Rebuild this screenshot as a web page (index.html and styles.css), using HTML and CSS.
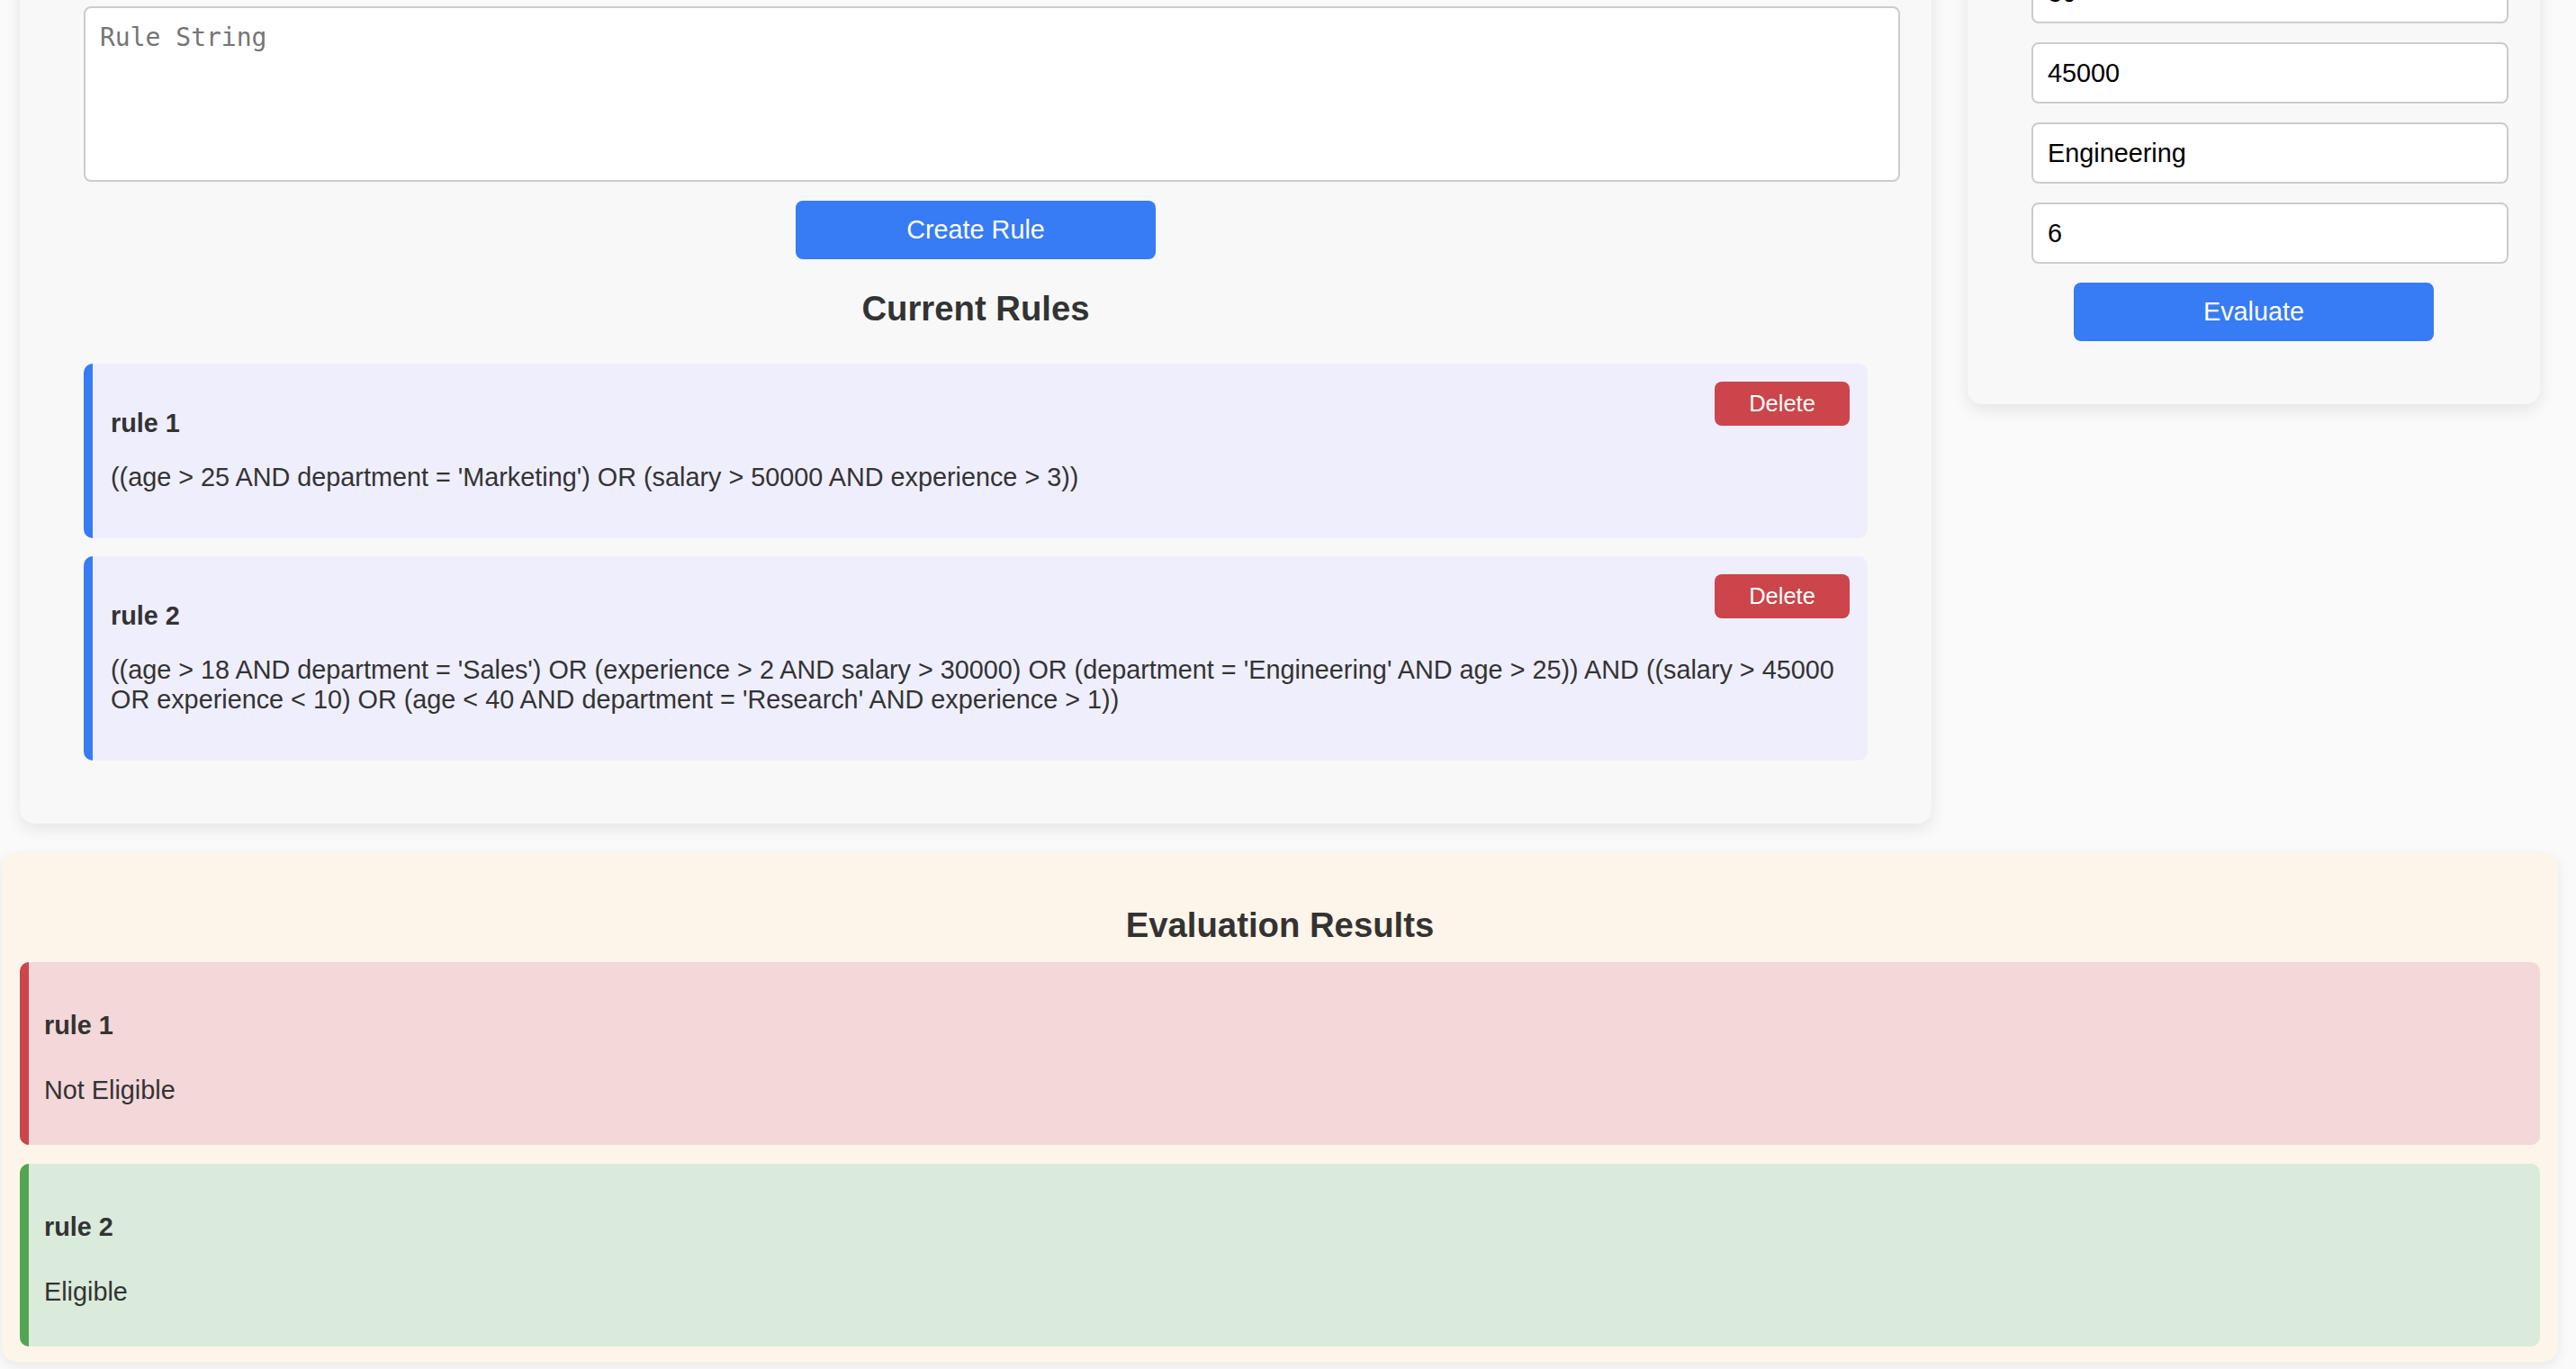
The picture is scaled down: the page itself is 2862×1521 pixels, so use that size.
FILE: index.html
```html
<!DOCTYPE html>
<html lang="en">
<head>
<meta charset="utf-8">
<title>Rule Engine</title>
<link rel="stylesheet" href="styles.css">
</head>
<body>
<div class="page">
  <div class="top-row">
    <section class="card card-rules">
      <textarea class="rule-input" placeholder="Rule String"></textarea>
      <button class="btn btn-primary">Create Rule</button>
      <h3 class="section-title">Current Rules</h3>
      <div class="rule-list">
        <div class="rule-item">
          <button class="btn-delete">Delete</button>
          <h4 class="rule-name">rule 1</h4>
          <p class="rule-text">((age &gt; 25 AND department = 'Marketing') OR (salary &gt; 50000 AND experience &gt; 3))</p>
        </div>
        <div class="rule-item">
          <button class="btn-delete">Delete</button>
          <h4 class="rule-name">rule 2</h4>
          <p class="rule-text">((age &gt; 18 AND department = 'Sales') OR (experience &gt; 2 AND salary &gt; 30000) OR (department = 'Engineering' AND age &gt; 25)) AND ((salary &gt; 45000 OR experience &lt; 10) OR (age &lt; 40 AND department = 'Research' AND experience &gt; 1))</p>
        </div>
      </div>
    </section>
    <section class="card card-eval">
      <input class="field" type="text" value="30">
      <input class="field" type="text" value="45000">
      <input class="field" type="text" value="Engineering">
      <input class="field" type="text" value="6">
      <button class="btn btn-primary">Evaluate</button>
    </section>
  </div>
  <section class="results">
    <h3 class="section-title results-title">Evaluation Results</h3>
    <div class="result-item result-fail">
      <h4 class="rule-name">rule 1</h4>
      <p class="result-text">Not Eligible</p>
    </div>
    <div class="result-item result-pass">
      <h4 class="rule-name">rule 2</h4>
      <p class="result-text">Eligible</p>
    </div>
  </section>
</div>
</body>
</html>
```

FILE: styles.css
```css
html, body {
  margin: 0;
  padding: 0;
}

body {
  background: #fafafa;
  color: #333;
  font-family: "Liberation Sans", Arial, Helvetica, sans-serif;
  font-size: 28.8px;
  overflow: hidden;
}

.page {
  padding: 0 20px 8px 2px;
}

.top-row {
  display: grid;
  grid-template-columns: 1fr 636px;
  column-gap: 40px;
  align-items: start;
  padding: 0 20px;
  margin-top: -100px;
}

.card {
  background: #f8f8f8;
  border-radius: 16px;
  box-shadow: 0 6px 18px rgba(0, 0, 0, 0.09);
  padding: 70px 71px;
}

.card-rules {
  padding-top: 107.3px;
}

.card-eval {
  padding-top: 58px;
}

.rule-input {
  display: block;
  box-sizing: content-box;
  width: 100%;
  height: 159px;
  margin: 0 0 20.7px 0;
  padding: 16px;
  border: 2px solid #ccc;
  border-radius: 8px;
  background: #fff;
  font-family: "DejaVu Sans Mono", "Liberation Mono", monospace;
  font-size: 28px;
  line-height: 33px;
  color: #333;
  resize: none;
}

.rule-input::placeholder {
  color: #757575;
}

.btn {
  display: block;
  margin: 0 auto;
  border: 0;
  cursor: pointer;
  font-family: "Liberation Sans", Arial, Helvetica, sans-serif;
}

.btn-primary {
  width: 400px;
  height: 65px;
  background: #377bf5;
  color: #fff;
  border-radius: 8px;
  font-size: 28.8px;
  padding: 0;
}

.section-title {
  font-size: 38.3px;
  line-height: 43px;
  font-weight: bold;
  text-align: center;
  margin: 33px 0 40.5px;
  color: #333;
}

.rule-list {
  display: flex;
  flex-direction: column;
  gap: 20px;
}

.rule-item {
  background: #efeefd;
  border-left: 10px solid #377bf5;
  border-radius: 10px;
  padding: 20px;
}

.btn-delete {
  float: right;
  width: 150px;
  height: 49px;
  padding: 0;
  border: 0;
  border-radius: 8px;
  background: #cc454b;
  color: #fff;
  font-family: "Liberation Sans", Arial, Helvetica, sans-serif;
  font-size: 25.5px;
  cursor: pointer;
}

.rule-name {
  font-size: 28.8px;
  line-height: 32px;
  font-weight: bold;
  margin: 30px 0 28px;
  color: #333;
}

.rule-text {
  margin: 0 0 31px;
  line-height: 33px;
  color: #333;
}

.field {
  display: block;
  box-sizing: content-box;
  width: 100%;
  height: 32px;
  margin: 0 0 21px 0;
  padding: 16px;
  border: 2px solid #ccc;
  border-radius: 8px;
  background: #fff;
  font-family: "Liberation Sans", Arial, Helvetica, sans-serif;
  font-size: 28.8px;
  line-height: 32px;
  color: #000;
}

.field:last-of-type {
  margin-bottom: 20.7px;
}

.results {
  margin-top: 33px;
  background: #fdf5e9;
  border-radius: 16px;
  box-shadow: 0 4px 14px rgba(0, 0, 0, 0.08);
  padding: 20px 20px 17px;
}

.results-title {
  margin: 37.5px 0 20.5px;
}

.result-item {
  border-left: 10px solid;
  border-radius: 10px;
  padding: 17px;
}

.result-item + .result-item {
  margin-top: 21px;
}

.result-item .rule-name {
  margin: 37px 0 40px;
}

.result-text {
  margin: 0 0 28px;
  line-height: 32px;
  color: #333;
}

.result-fail {
  background: #f3d7d9;
  border-left-color: #cc454b;
}

.result-pass {
  background: #daebdb;
  border-left-color: #52a552;
}
```
